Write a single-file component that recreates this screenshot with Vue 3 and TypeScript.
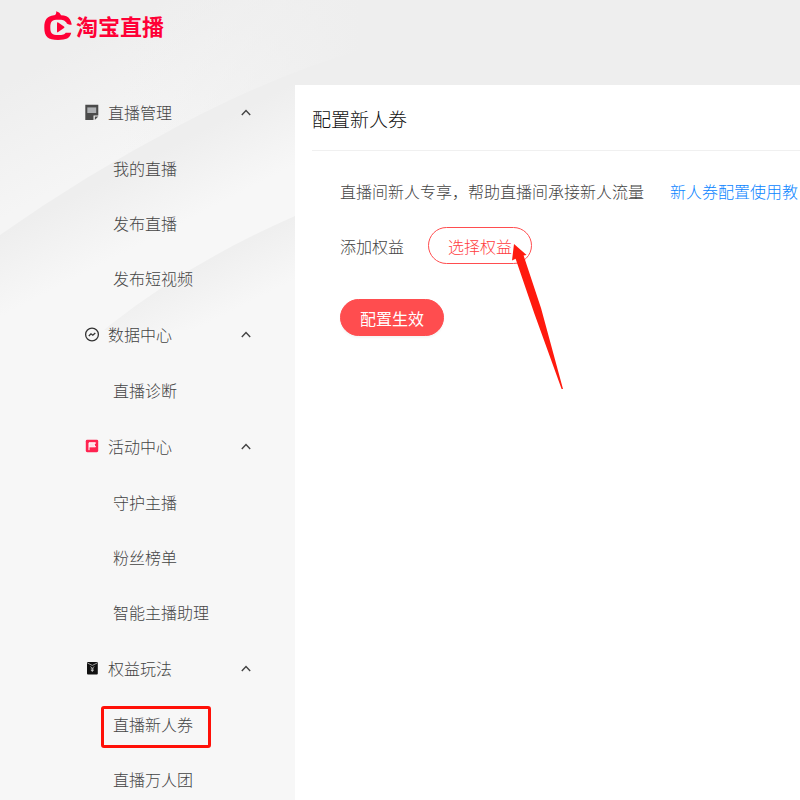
<script setup lang="ts">
import { reactive } from 'vue'

interface MenuItem {
  label: string
  marked?: boolean
}

interface MenuGroup {
  title: string
  icon: 'note' | 'trend' | 'flag' | 'coupon'
  open: boolean
  items: MenuItem[]
}

const groups = reactive<MenuGroup[]>([
  {
    title: '直播管理',
    icon: 'note',
    open: true,
    items: [{ label: '我的直播' }, { label: '发布直播' }, { label: '发布短视频' }],
  },
  {
    title: '数据中心',
    icon: 'trend',
    open: true,
    items: [{ label: '直播诊断' }],
  },
  {
    title: '活动中心',
    icon: 'flag',
    open: true,
    items: [{ label: '守护主播' }, { label: '粉丝榜单' }, { label: '智能主播助理' }],
  },
  {
    title: '权益玩法',
    icon: 'coupon',
    open: true,
    items: [{ label: '直播新人券', marked: true }, { label: '直播万人团' }],
  },
])
</script>

<template>
  <div class="page">
    <svg class="backdrop" viewBox="0 0 800 400" preserveAspectRatio="xMinYMin slice" aria-hidden="true">
      <defs>
        <linearGradient id="upper" gradientUnits="userSpaceOnUse" x1="60" y1="55" x2="115" y2="160">
          <stop offset="0" stop-color="#eeeeee" />
          <stop offset="1" stop-color="#f5f5f5" />
        </linearGradient>
        <linearGradient id="upper-fade" gradientUnits="userSpaceOnUse" x1="120" y1="0" x2="360" y2="0">
          <stop offset="0" stop-color="#eeeeee" stop-opacity="0" />
          <stop offset="1" stop-color="#eeeeee" />
        </linearGradient>
        <linearGradient id="middle" gradientUnits="userSpaceOnUse" x1="120" y1="172" x2="154" y2="238">
          <stop offset="0" stop-color="#eeeeee" />
          <stop offset="1" stop-color="#f7f7f7" />
        </linearGradient>
        <linearGradient id="lower" gradientUnits="userSpaceOnUse" x1="220" y1="255" x2="245" y2="305">
          <stop offset="0" stop-color="#efefef" />
          <stop offset="1" stop-color="#f7f7f7" />
        </linearGradient>
      </defs>
      <rect width="800" height="400" fill="#f7f7f7" />
      <path d="M0 0H800V86H295L0 236Z" fill="url(#upper)" />
      <path d="M0 0H800V86H295L0 236Z" fill="url(#upper-fade)" />
      <path d="M0 235Q85 175 180 125T360 50V330H0Z" fill="url(#middle)" />
      <path d="M360 50H800V90H295V76Z" fill="#eeeeee" />
      <path d="M110 325Q190 262 295 216V330H104Z" fill="url(#lower)" />
    </svg>

    <header class="topbar">
      <a class="brand" href="#">
        <svg class="brand-mark" viewBox="0 0 28 30" aria-hidden="true">
          <path
            d="M12.2 0.3C14.8 1 16.4 2.5 17 4.2C21.2 4.3 24.2 5.5 26 8.4L27 11H21.6C20.6 9.3 18.8 8.8 14.2 8.8C8.2 8.8 6.3 10.2 6.3 16.6C6.3 22.6 8.2 24.1 14.2 24.1C18.8 24.1 20.8 23.6 21.7 21.8H27.2C25.8 27.3 22.3 29 14 29C4 29 0.3 26.1 0.3 16.6C0.3 8.9 3 5.2 10 4.3C11.7 4.1 12.5 2.8 12.2 0.3Z"
          />
          <path d="M13 12.2Q13 10.9 14.2 11.6L20 15.5Q21 16.3 20 17.1L14.2 21Q13 21.7 13 20.4Z" />
          <path d="M21.8 10.6H26.9L27.8 13.4Q25 14.4 22.8 12.6Z" />
        </svg>
        <span>淘宝直播</span>
      </a>
    </header>

    <div class="body">
      <nav class="sidebar">
        <section v-for="group in groups" :key="group.title">
          <button class="group" type="button" :aria-expanded="group.open" @click="group.open = !group.open">
            <svg class="group-icon" viewBox="0 0 16 16" aria-hidden="true">
              <template v-if="group.icon === 'note'">
                <path d="M1.3 0.8H14.3V11.6H9.5V16H1.3Z" fill="#4b4b4b" />
                <path d="M3.3 3.4H12.2V9H3.3Z" fill="#aeb0b3" />
                <path d="M10.8 12.6H14.3L10.8 16Z" fill="#4b4b4b" />
              </template>
              <template v-else-if="group.icon === 'trend'">
                <circle cx="8" cy="8.5" r="6.4" fill="none" stroke="#333" stroke-width="1.3" />
                <path d="M4.8 10L7 7.8L8.8 9.2L11.3 6.9" fill="none" stroke="#333" stroke-width="1.3" />
              </template>
              <template v-else-if="group.icon === 'flag'">
                <rect x="1.8" y="1.8" width="12.4" height="12.4" rx="1.4" fill="#ff2350" />
                <path d="M5 12.2V4.8H11.5L10.1 6.8L11.5 8.8H5" fill="#ffdce4" stroke="#fff" stroke-width="1" />
              </template>
              <template v-else>
                <rect x="3" y="2" width="10.8" height="12.4" rx="1" fill="#111" />
                <path d="M3.4 3L8.3 5.4L13.2 3" fill="none" stroke="#aaa" stroke-width="0.9" />
                <path d="M6.5 6.5L8.3 8.5L10.1 6.5M8.3 8.5V12M6.7 9H9.9M6.9 10.5H9.7" fill="none" stroke="#ccc" stroke-width="0.8" />
              </template>
            </svg>
            <span class="group-title">{{ group.title }}</span>
            <svg class="chevron" :class="{ closed: !group.open }" viewBox="0 0 10 8" aria-hidden="true">
              <path d="M0.8 7L5 2.5L9.2 7" fill="none" stroke="#444" stroke-width="1.4" />
            </svg>
          </button>
          <ul v-show="group.open" class="items">
            <li v-for="item in group.items" :key="item.label" class="item">
              <a href="#" :class="{ marked: item.marked }">{{ item.label }}</a>
            </li>
          </ul>
        </section>
      </nav>

      <main class="panel">
        <h1 class="title">配置新人券</h1>
        <div class="content">
          <p class="intro">
            <span>直播间新人专享，帮助直播间承接新人流量</span>
            <a href="#">新人券配置使用教</a>
          </p>
          <div class="field">
            <span id="benefit-label">添加权益</span>
            <div class="pick">
              <button class="pill outline" type="button" aria-describedby="benefit-label">选择权益</button>
              <svg class="arrow" viewBox="0 0 52 146" aria-hidden="true">
                <path d="M2 0L14.6 11L11.6 11.6L29 64L51 145L49.6 145L22.5 70L3.6 14.8L0 16.4Z" fill="#ff1a0e" />
              </svg>
            </div>
          </div>
          <button class="pill solid" type="button">配置生效</button>
        </div>
      </main>
    </div>
  </div>
</template>

<style>
body {
  margin: 0;
}
</style>

<style scoped>
.page {
  position: relative;
  display: flex;
  flex-direction: column;
  height: 100vh;
  overflow: hidden;
  background: #f7f7f7;
  color: #444;
  font-family: 'Noto Sans CJK SC', sans-serif;
  font-size: 16px;
  font-weight: 300;
  line-height: 24px;
}

.backdrop {
  position: absolute;
  top: 0;
  left: 0;
  width: 100%;
}

.topbar {
  position: relative;
  flex: none;
  box-sizing: border-box;
  height: 85px;
  padding: 11px 44px;
}

.brand {
  display: inline-flex;
  align-items: center;
  gap: 4px;
  color: #ff0036;
  font-size: 22px;
  font-weight: 700;
  line-height: 28px;
  text-decoration: none;
}

.brand span {
  padding-bottom: 2px;
}

.brand-mark {
  width: 28px;
  height: 30px;
  fill: currentColor;
}

.body {
  position: relative;
  display: flex;
  flex: 1;
  min-height: 0;
}

.sidebar {
  flex: none;
  box-sizing: border-box;
  width: 295px;
  margin-top: -2px;
  padding: 0 44px 0 84px;
}

.group {
  display: flex;
  align-items: center;
  gap: 8px;
  width: 100%;
  height: 57px;
  padding: 0;
  border: 0;
  background: none;
  color: inherit;
  font: inherit;
  cursor: pointer;
}

.group-icon {
  width: 16px;
  height: 16px;
}

.group-title {
  flex: 1;
  text-align: left;
}

.chevron {
  width: 10px;
  height: 8px;
}

.chevron.closed {
  transform: rotate(180deg);
}

.items {
  margin: 0;
  padding: 0 0 0 29px;
  list-style: none;
}

.item {
  display: flex;
  align-items: center;
  height: 55px;
}

.item a {
  position: relative;
  color: inherit;
  text-decoration: none;
}

.item .marked::after {
  content: '';
  position: absolute;
  inset: -6px -18px -12px -12px;
  border: 3px solid #ff1008;
  border-radius: 3px;
}

.panel {
  flex: 1;
  min-width: 0;
  padding: 0 0 0 17px;
  overflow: hidden;
  background: #fff;
}

.title {
  margin: 0;
  padding: 20px 0 17px;
  border-bottom: 1px solid #f0f0f0;
  color: #111;
  font-size: 19px;
  font-weight: 300;
  line-height: 28px;
}

.content {
  padding: 28px 0 0 28px;
}

.intro {
  display: flex;
  gap: 26px;
  margin: 0;
  white-space: nowrap;
}

.intro a {
  color: #0a84ff;
  text-decoration: none;
}

.field {
  display: flex;
  align-items: center;
  gap: 24px;
  margin: 24px 0 35px;
}

.pick {
  position: relative;
}

.pill {
  display: block;
  box-sizing: border-box;
  height: 37px;
  padding: 0 19px;
  border: 1px solid #ff4d4f;
  border-radius: 19px;
  font: inherit;
  cursor: pointer;
}

.outline {
  background: #fff;
  color: #ff3b3d;
}

.solid {
  background: #ff4d4f;
  box-shadow: 0 2px 2px rgba(0, 0, 0, 0.04);
  color: #fff;
  font-weight: 400;
}

.arrow {
  position: absolute;
  top: 17px;
  left: 84px;
  width: 52px;
  height: 146px;
  pointer-events: none;
}
</style>
